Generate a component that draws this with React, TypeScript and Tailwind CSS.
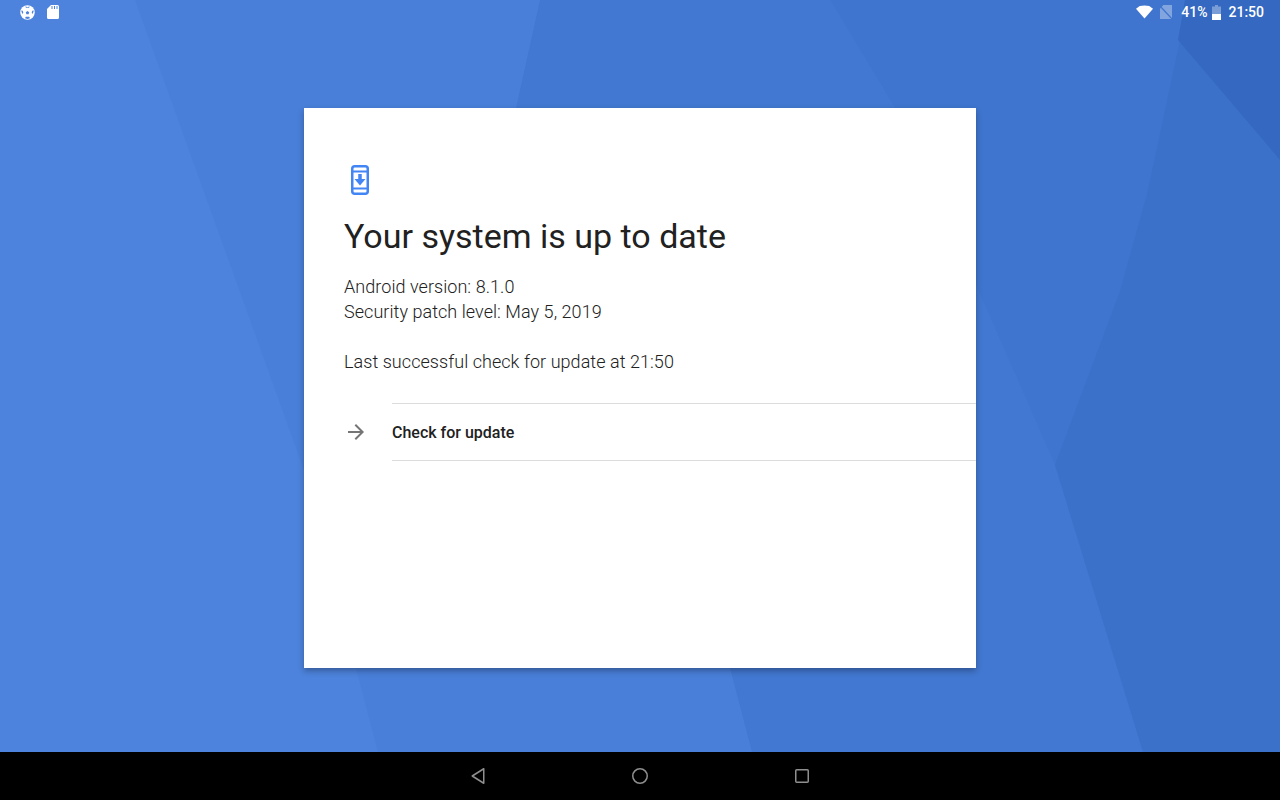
const roboto = { fontFamily: "Roboto, sans-serif" }

function Wallpaper() {
  return (
    <svg className="absolute inset-0 h-[752px] w-[1280px]" viewBox="0 0 1280 752">
      <rect width="1280" height="752" fill="#497fd9" />
      <polygon points="0,0 135,0 304,470 378,752 0,752" fill="#4d83dc" />
      <polygon points="540,0 830,0 895,108 976,285 1055,465 1143,752 752,752 730,668 516,108" fill="#4278d1" />
      <polygon points="830,0 1280,0 1280,752 1143,752 1055,465 976,285 895,108" fill="#3f75ce" />
      <polygon points="1055,465 1120,291 1147,194 1180,40 1185,0 1280,0 1280,752 1143,752" fill="#3c71ca" />
      <polygon points="1185,0 1280,0 1280,160 1178,40" fill="#3569c1" />
    </svg>
  )
}

function StatusBar() {
  return (
    <div className="relative flex h-6 items-center justify-between pl-5 pr-4 text-white">
      <div className="flex items-center gap-3">
        <svg width="15" height="15" viewBox="0 0 15 15">
          <circle cx="7.500" cy="7.500" r="7.250" fill="#fff" />
          <polygon points="7.500,6 9.200,7.200 8.600,9.200 6.400,9.200 5.800,7.200" fill="#4d83dc" />
          <path d="M5.400 1.300l2.100.9 2.100-.9-.5 1.500H5.900zM1.200 5.600l1.500.2.600 1.900-1 1.200zM13.800 5.600l-1.500.2-.6 1.900 1 1.200zM5 13.300l.8-1.500h3.400l.8 1.500-2.500.6z" fill="#4d83dc" />
        </svg>
        <svg width="12" height="14" viewBox="0 0 12 14">
          <path d="M4 0h6.500A1.500 1.500 0 0 1 12 1.500v11a1.500 1.500 0 0 1-1.500 1.500h-9A1.500 1.500 0 0 1 0 12.500V4z" fill="#fff" />
          <path d="M5 1v3M7.500 1v3M10 1v3" stroke="#4d83dc" strokeWidth="1" />
        </svg>
      </div>
      <div className="flex items-center text-[14px] font-medium">
        <svg width="17" height="14" viewBox="0 0 18 14">
          <polygon points="0,3.500 4,0.600 9,0 14,0.600 18,3.500 9,14" fill="#fff" />
        </svg>
        <svg className="ml-[7px]" width="12" height="14" viewBox="0 0 12 14">
          <path d="M3.500 0H12v14H0V3.500z" fill="#fff" fillOpacity="0.35" />
          <path d="M0 1l12 13" stroke="#3f75ce" strokeWidth="1.200" />
        </svg>
        <span className="ml-[9px]">41%</span>
        <svg className="ml-[5px]" width="9" height="15" viewBox="0 0 9 15">
          <path d="M3 0h3v1.500h3V15H0V1.500h3z" fill="#fff" fillOpacity="0.35" />
          <rect y="9" width="9" height="6" fill="#fff" />
        </svg>
        <span className="ml-[7px]">21:50</span>
      </div>
    </div>
  )
}

function NavBar() {
  return (
    <div className="absolute bottom-0 left-0 flex h-12 w-full items-center justify-center gap-[146px] bg-black">
      <svg width="16" height="16" viewBox="0 0 16 16" fill="none" stroke="#8f8f8f" strokeWidth="1.500">
        <path d="M13.750.750v14.500L2.250 8z" strokeLinejoin="round" />
      </svg>
      <svg width="16" height="16" viewBox="0 0 16 16" fill="none" stroke="#8f8f8f" strokeWidth="1.500">
        <circle cx="8" cy="8" r="7.250" />
      </svg>
      <svg width="16" height="16" viewBox="0 0 16 16" fill="none" stroke="#8f8f8f" strokeWidth="1.500">
        <rect x="1.750" y="1.750" width="12.500" height="12.500" rx="1" />
      </svg>
    </div>
  )
}

export default function App() {
  return (
    <div className="relative h-[800px] w-[1280px] overflow-hidden" style={roboto}>
      <Wallpaper />
      <StatusBar />
      <div className="relative mx-auto mt-[84px] flex h-[560px] w-[672px] flex-col bg-white pt-14 shadow-[0_3px_6px_rgba(0,0,0,0.3)]">
        <div className="pl-10">
          <svg className="ml-1" width="24" height="32" viewBox="0 0 24 32" fill="none">
            <rect x="4.250" y="2.250" width="15.500" height="27.500" rx="2.500" stroke="#4285f4" strokeWidth="2.500" />
            <path d="M4 7.500h16M4 24.500h16" stroke="#4285f4" strokeWidth="2" />
            <rect x="10.250" y="10" width="3.500" height="7" fill="#4285f4" />
            <polygon points="6.500,15 17.500,15 12,21.500" fill="#4285f4" />
          </svg>
          <h1 className="mt-[18px] text-[34px] leading-[44px] text-[#212121]">Your system is up to date</h1>
          <div className="mt-4 text-[18px] font-light leading-[25px] tracking-[0.05px] text-[#212121]">
            <p>Android version: 8.1.0</p>
            <p>Security patch level: May 5, 2019</p>
            <p className="mt-[25px]">Last successful check for update at 21:50</p>
          </div>
        </div>
        <div className="mt-[29px] flex">
          <div className="flex w-[88px] items-center pl-10">
            <svg width="24" height="24" viewBox="0 0 24 24" fill="#757575">
              <path d="M12 4l-1.410 1.410L16.170 11H4v2h12.170l-5.580 5.590L12 20l8-8z" />
            </svg>
          </div>
          <div className="flex h-[58px] flex-1 items-center border-y border-[#dcdcdc] pt-0.5 text-[16px] font-medium text-[#212121]">
            Check for update
          </div>
        </div>
      </div>
      <NavBar />
    </div>
  )
}
